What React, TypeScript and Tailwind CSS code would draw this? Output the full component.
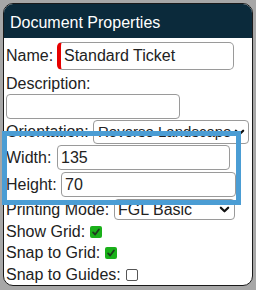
import React from 'react';

const font = { fontFamily: '"Liberation Sans", Arial, sans-serif' };

const Check = ({ checked }: { checked: boolean }) =>
    checked ? (
        <span className="inline-flex h-[12px] w-[12px] items-center justify-center rounded-[2px] bg-[#1ab01a]">
            <svg viewBox="0 0 12 12" className="h-[10px] w-[10px]" fill="none" stroke="#1d3b1d" strokeWidth="2.2" strokeLinecap="round" strokeLinejoin="round">
                <polyline points="2.5 6.5 5 9 9.5 3" />
            </svg>
        </span>
    ) : (
        <span className="inline-block h-[12px] w-[12px] rounded-[2px] border border-[#555] bg-white" />
    );

const Chevron = () => (
    <svg viewBox="0 0 12 12" className="h-[11px] w-[11px] shrink-0" fill="none" stroke="#111" strokeWidth="2.4" strokeLinecap="round" strokeLinejoin="round">
        <polyline points="2 4 6 8 10 4" />
    </svg>
);

export default function App() {
    return (
        <div className="relative h-[290px] w-[256px] overflow-hidden bg-[#a7a7a7] pl-[3px] pt-[3px]" style={font}>
            <div className="h-[283px] w-[250px] overflow-hidden rounded-[10px] border border-[#1a1a1a] bg-white text-[16px] leading-[20px] text-[#222]">
                <div className="flex h-[34px] items-center bg-[#0b2a3b] pl-[6px] pt-[4px] text-white">Document Properties</div>

                <div className="flex items-center pl-[2px] pt-[4px]">
                    <span className="w-[51px]">Name:</span>
                    <div className="flex h-[28px] w-[177px] items-center rounded-[5px] border border-[#9a9a9a] border-l-[4px] border-l-[#e60000] pl-[3px]">
                        Standard Ticket
                    </div>
                </div>

                <div className="h-[24px] pl-[2px] pt-[4px]">Description:</div>
                <div className="ml-[2px] h-[25px] w-[174px] rounded-[4px] border border-[#9a9a9a]" />

                <div className="flex items-center pl-[2px] pt-[1px]">
                    <span className="w-[87px] shrink-0 whitespace-nowrap">Orientation:</span>
                    <div className="flex h-[24px] w-[156px] shrink-0 items-center justify-between rounded-[4px] border border-[#9a9a9a] pl-[4px] pr-[3px]">
                        <span className="whitespace-nowrap text-[15px]">Reverse Landscape</span>
                        <Chevron />
                    </div>
                </div>

                <div className="flex items-center pl-[2px] pt-[1px]">
                    <span className="w-[51px]">Width:</span>
                    <div className="flex h-[25px] w-[173px] items-center rounded-[4px] border border-[#9a9a9a] pl-[3px]">135</div>
                </div>
                <div className="flex items-center pl-[2px] pt-[2px]">
                    <span className="w-[55px]">Height:</span>
                    <div className="flex h-[25px] w-[175px] items-center rounded-[4px] border border-[#9a9a9a] pl-[3px]">70</div>
                </div>

                <div className="flex items-center pl-[2px] pt-[2px]">
                    <span className="w-[108px] whitespace-nowrap">Printing Mode:</span>
                    <div className="flex h-[21px] w-[121px] items-center justify-between rounded-[4px] border border-[#9a9a9a] pl-[3px] pr-[4px]">
                        FGL Basic
                        <Chevron />
                    </div>
                </div>

                <div className="flex h-[22px] items-center gap-[5px] pl-[2px] pt-[2px]">
                    <span>Show Grid:</span>
                    <Check checked />
                </div>
                <div className="flex h-[22px] items-center gap-[5px] pl-[2px]">
                    <span>Snap to Grid:</span>
                    <Check checked />
                </div>
                <div className="flex h-[22px] items-center gap-[5px] pl-[2px]">
                    <span>Snap to Guides:</span>
                    <Check checked={false} />
                </div>
            </div>

            <div className="absolute left-[2px] top-[131px] h-[74px] w-[239px] border-[5px] border-[#4b9dd4]" />
        </div>
    );
}
